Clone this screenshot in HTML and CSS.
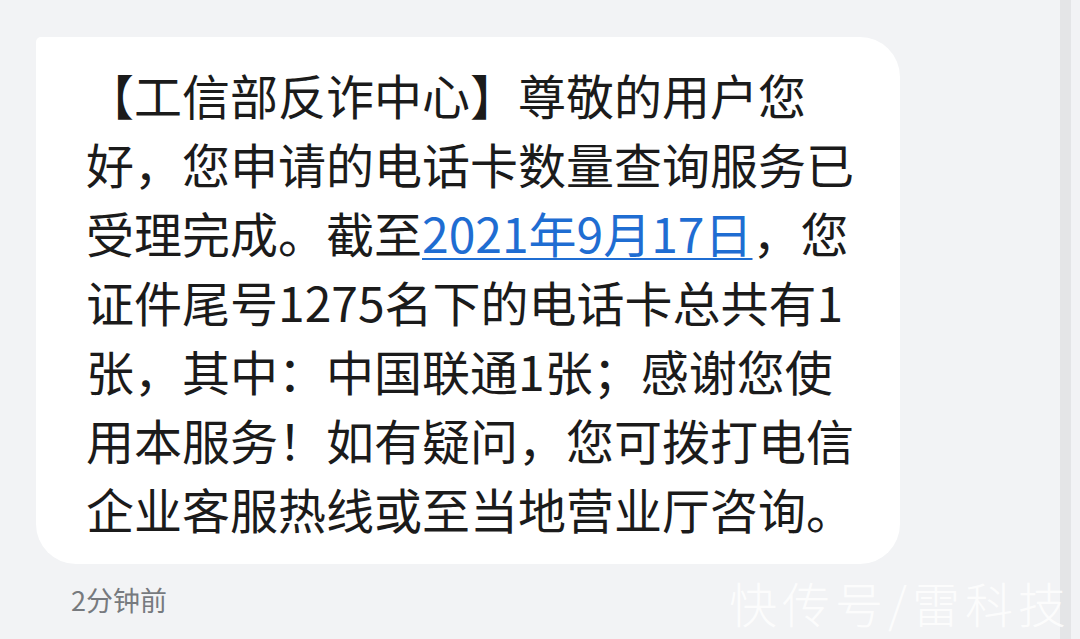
FILE: index.html
```html
<!DOCTYPE html>
<html lang="zh-CN">
<head>
    <meta charset="UTF-8">
    <meta name="viewport" content="width=device-width, initial-scale=1.0">
    <title>短信</title>
    <link rel="stylesheet" href="styles.css">
</head>
<body>
    <div class="screen">
        <div class="thread">
            <div class="bubble">
                <p class="message">【工信部反诈中心】尊敬的用户您<br>好，您申请的电话卡数量查询服务已<br>受理完成。截至<a href="#" class="date-link">2021年9月17日</a>，您<br>证件尾号1275名下的电话卡总共有1<br>张，其中：中国联通1张；感谢您使<br>用本服务！如有疑问，您可拨打电信<br>企业客服热线或至当地营业厅咨询。</p>
            </div>
            <div class="time">2分钟前</div>
        </div>
        <div class="scroll-track"></div>
    </div>
    <div class="watermark">快传号/雷科技</div>
</body>
</html>
```

FILE: styles.css
```css
html, body {
    margin: 0;
    height: 100%;
}
body {
    background-color: #f2f3f5;
    font-family: "Noto Sans CJK SC", "Noto Sans", sans-serif;
    overflow: hidden;
    position: relative;
}
.screen {
    display: flex;
    height: 100%;
}
.thread {
    flex: 1;
    padding: 37px 0 0 36px;
}
.bubble {
    width: 864px;
    box-sizing: border-box;
    background-color: #ffffff;
    border-radius: 5px 40px 40px 40px;
    padding: 23px 20px 21px 50px;
}
.message {
    margin: 0;
    font-size: 48px;
    line-height: 69px;
    color: #1b1b1b;
    white-space: nowrap;
}
.date-link {
    color: #1f6dd2;
    text-decoration: underline;
    text-decoration-thickness: 2px;
    text-underline-offset: 5px;
}
.time {
    margin: 18px 0 0 35px;
    font-size: 27px;
    line-height: 36px;
    color: #777a7e;
}
.scroll-track {
    width: 11px;
    margin-right: 9px;
    background-color: #e4e5e7;
}
.watermark {
    position: absolute;
    left: 729px;
    top: 574px;
    font-size: 48px;
    font-weight: 300;
    line-height: 56px;
    letter-spacing: 5px;
    color: rgba(255, 255, 255, 0.8);
    white-space: nowrap;
}
```
